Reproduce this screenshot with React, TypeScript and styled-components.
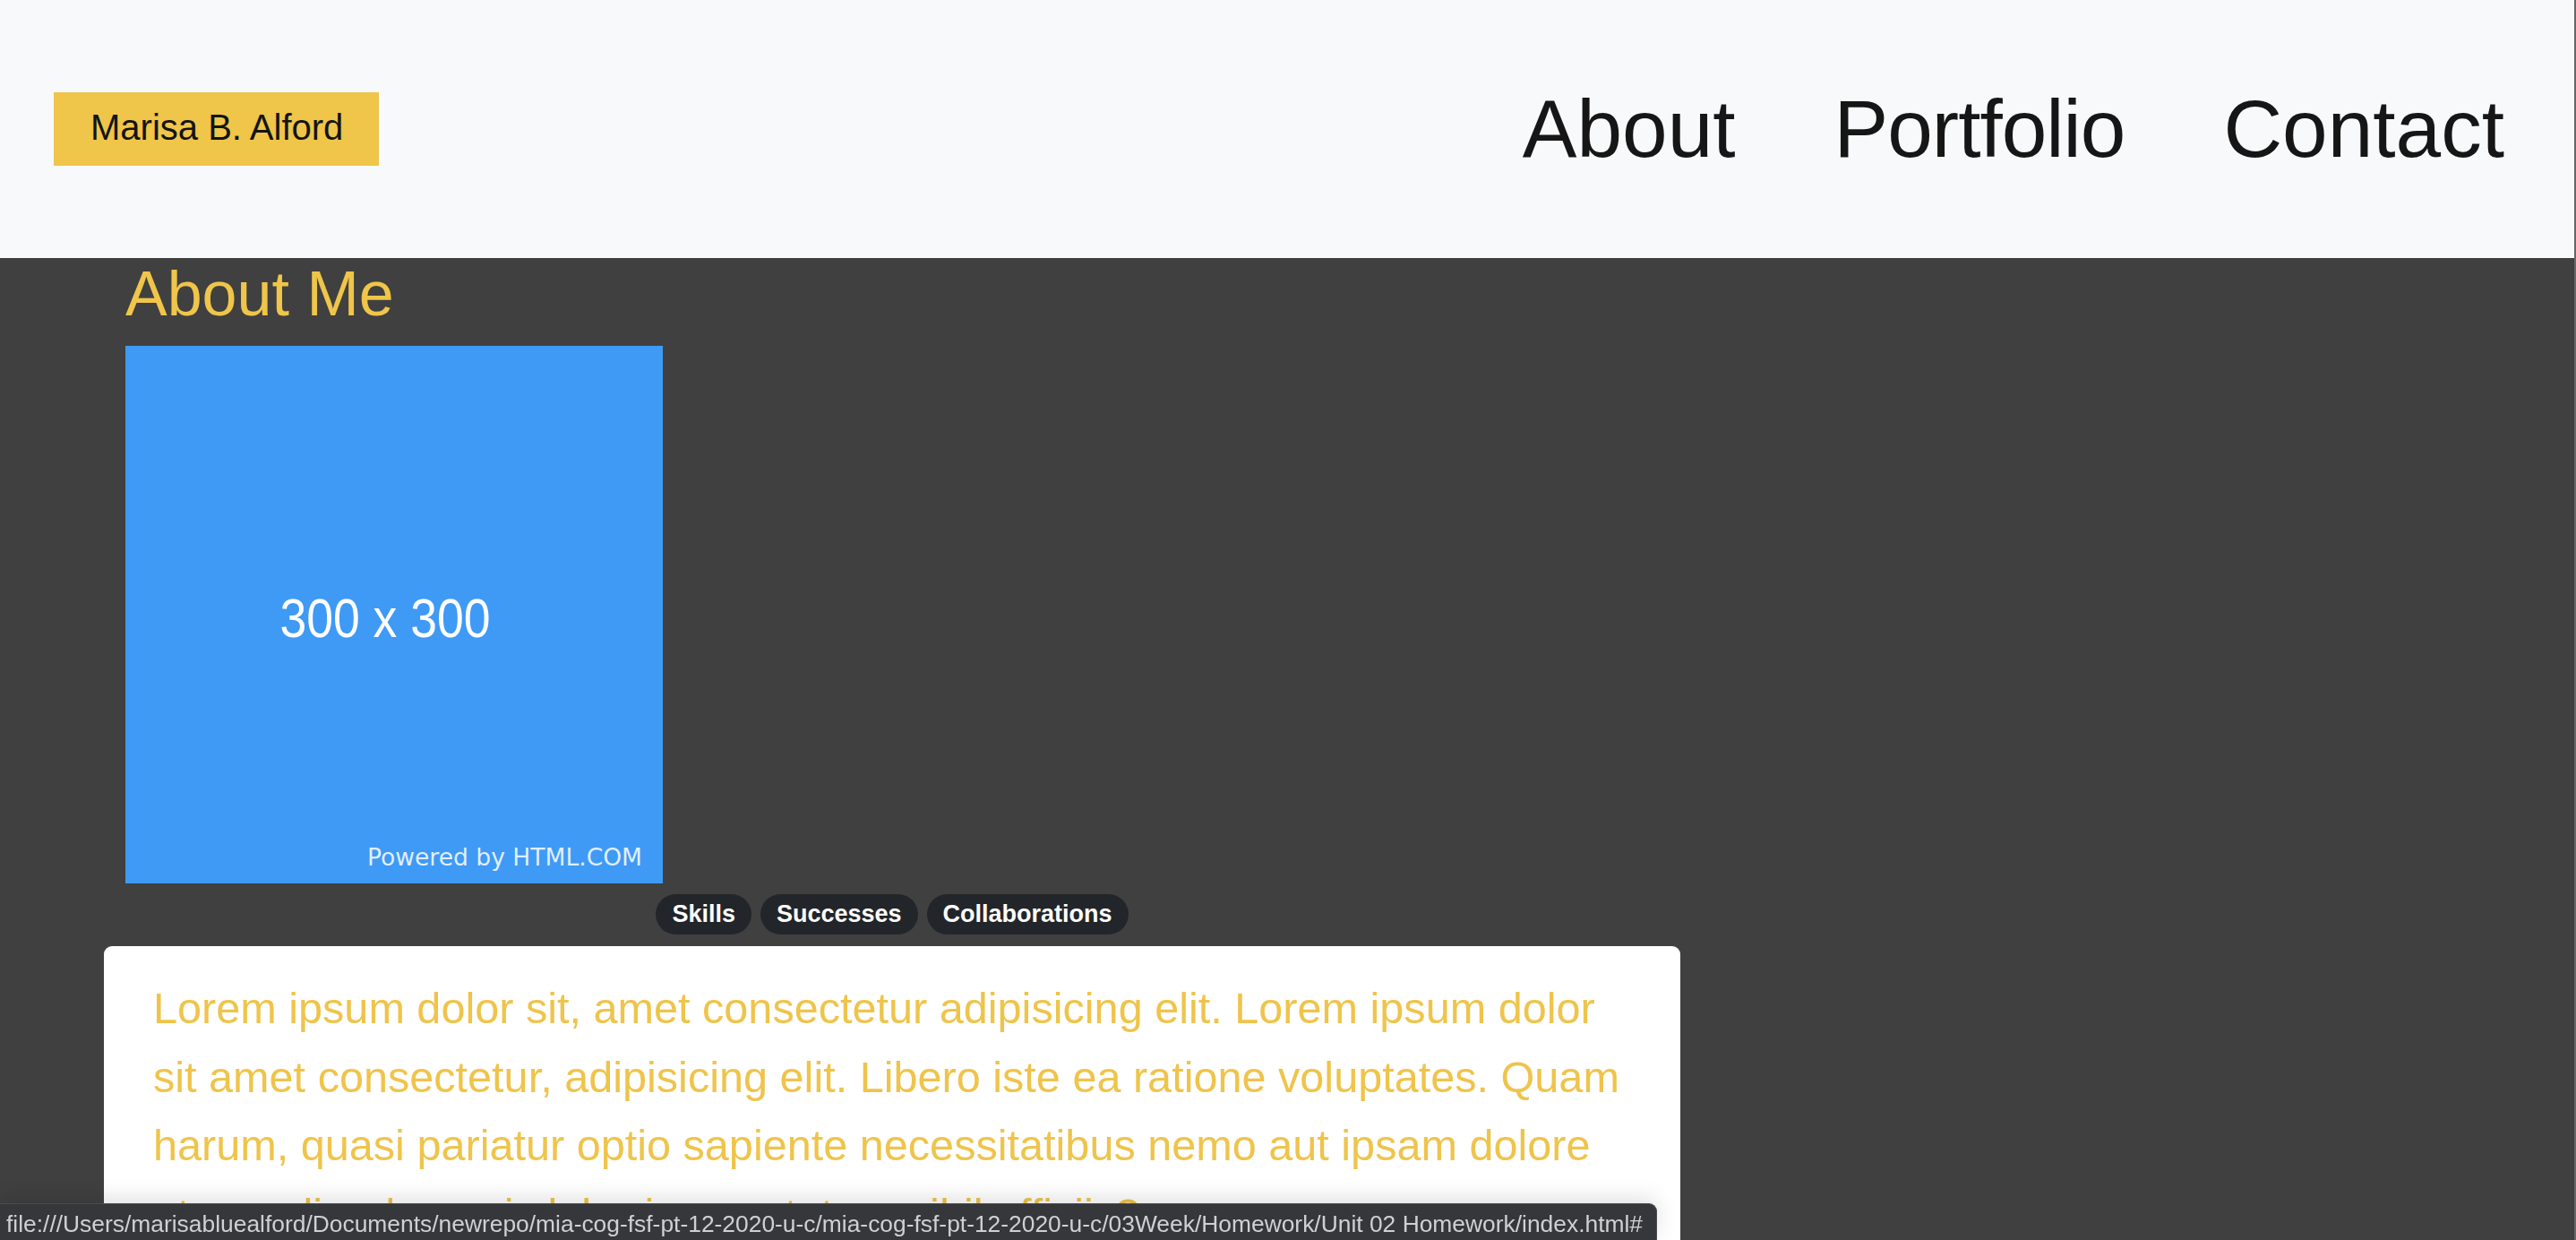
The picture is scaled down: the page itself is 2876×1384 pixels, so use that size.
import React from "react";
import styled, { createGlobalStyle } from "styled-components";

const GlobalStyle = createGlobalStyle`
  html, body {
    margin: 0;
    padding: 0;
    background: #404040;
  }
  body {
    font-family: "Liberation Sans", Arial, Helvetica, sans-serif;
  }
  * { box-sizing: border-box; }
`;

const Page = styled.div`
  min-height: 1384px;
  background: #404040;
  border-right: 2px solid #666666;
`;

const Header = styled.header`
  height: 288px;
  background: #f8f9fa;
  display: flex;
  align-items: center;
  justify-content: space-between;
  padding: 0 78px 0 60px;
`;

const Brand = styled.a`
  display: flex;
  align-items: center;
  height: 82px;
  padding: 0 40px 4px 41px;
  background: #efc54a;
  color: #141414;
  font-size: 40px;
  text-decoration: none;
`;

const Nav = styled.nav`
  display: flex;
  align-items: center;
  gap: 110px;
`;

const NavLink = styled.a<{ $tight?: boolean }>`
  font-size: 91px;
  color: #161616;
  text-decoration: none;
  line-height: 1.15;
  letter-spacing: ${(p) => (p.$tight ? "-1px" : "0")};
`;

const Main = styled.main`
  padding: 0 0 0 116px;
`;

const AboutTitle = styled.h2`
  margin: 0 0 18px 24px;
  font-size: 70px;
  font-weight: 400;
  line-height: normal;
  color: #efc54a;
`;

const Placeholder = styled.svg`
  display: block;
  margin-left: 24px;
  width: 600px;
  height: 600px;
`;

const Section = styled.section`
  width: 1760px;
  margin-top: 12px;
  display: flex;
  flex-direction: column;
  gap: 13px;
`;

const TabRow = styled.div`
  display: flex;
  justify-content: center;
  gap: 10px;
`;

const Pill = styled.button`
  height: 45px;
  padding: 0 18px;
  border: none;
  border-radius: 23px;
  background: #222529;
  color: #ffffff;
  font-family: "Liberation Sans", Arial, sans-serif;
  font-weight: 700;
  font-size: 27px;
  cursor: pointer;
`;

const Card = styled.div`
  background: #ffffff;
  border-radius: 9px;
  padding: 31px 61px 40px 55px;
`;

const CardText = styled.p`
  margin: 0;
  font-size: 48.6px;
  line-height: 76.5px;
  color: #efc44b;
`;

const StatusBar = styled.div`
  position: fixed;
  left: 0;
  bottom: 0;
  width: 1850px;
  height: 41px;
  padding: 5px 0 0 7px;
  display: flex;
  align-items: center;
  background: #36373a;
  border-top: 1px solid #4a4b4e;
  border-right: 1px solid #4a4b4e;
  border-top-right-radius: 9px;
  box-shadow: 0 -6px 24px rgba(0, 0, 0, 0.12);
  color: #cfd0d2;
  font-size: 26.4px;
  white-space: nowrap;
  overflow: hidden;
`;

export default function App() {
  return (
    <>
      <GlobalStyle />
      <Page>
        <Header>
          <Brand href="#">Marisa B. Alford</Brand>
          <Nav>
            <NavLink href="#">About</NavLink>
            <NavLink href="#" $tight>
              Portfolio
            </NavLink>
            <NavLink href="#">Contact</NavLink>
          </Nav>
        </Header>
        <Main>
          <AboutTitle>About Me</AboutTitle>
          <Placeholder viewBox="0 0 600 600" role="img" aria-label="300 x 300 placeholder">
            <rect width="600" height="600" fill="#3f9af5" />
            <text
              x="290"
              y="325"
              textAnchor="middle"
              fill="#ffffff"
              fontFamily="'Liberation Sans Narrow', 'Liberation Sans', Arial, sans-serif"
              fontSize="62"
              textLength="235"
              lengthAdjust="spacingAndGlyphs"
            >
              300 x 300
            </text>
            <text
              x="577"
              y="580"
              textAnchor="end"
              fill="#ffffff"
              fillOpacity="0.85"
              fontFamily="'DejaVu Sans', Verdana, sans-serif"
              fontSize="26"
              textLength="307"
              lengthAdjust="spacingAndGlyphs"
            >
              Powered by HTML.COM
            </text>
          </Placeholder>
          <Section>
            <TabRow>
              <Pill>Skills</Pill>
              <Pill>Successes</Pill>
              <Pill>Collaborations</Pill>
            </TabRow>
            <Card>
              <CardText>
                Lorem ipsum dolor sit, amet consectetur adipisicing elit. Lorem ipsum dolor sit amet
                consectetur, adipisicing elit. Libero iste ea ratione voluptates. Quam harum, quasi
                pariatur optio sapiente necessitatibus nemo aut ipsam dolore et repudiandae quis
                laboriosam, totam nihil officiis?
              </CardText>
            </Card>
          </Section>
        </Main>
      </Page>
      <StatusBar>
        file:///Users/marisabluealford/Documents/newrepo/mia-cog-fsf-pt-12-2020-u-c/mia-cog-fsf-pt-12-2020-u-c/03Week/Homework/Unit 02 Homework/index.html#
      </StatusBar>
    </>
  );
}
